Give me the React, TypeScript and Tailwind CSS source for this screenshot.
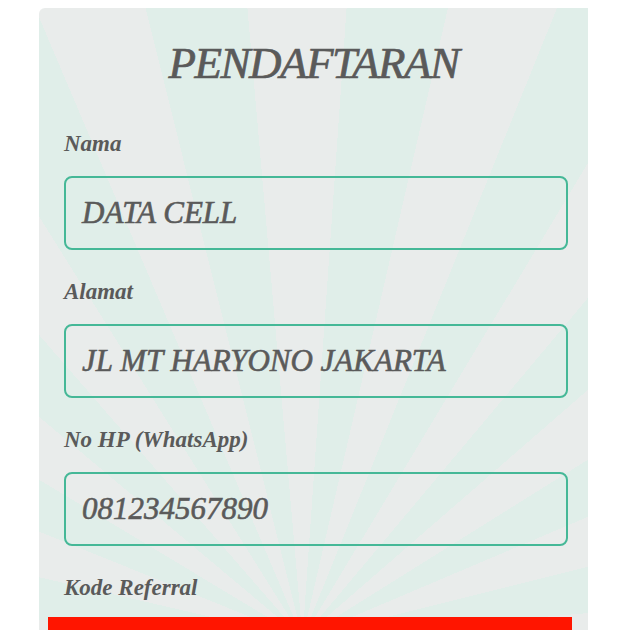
const fields = [
  { label: 'Nama', value: 'DATA CELL' },
  { label: 'Alamat', value: 'JL MT HARYONO JAKARTA' },
  { label: 'No HP (WhatsApp)', value: '081234567890' },
];

export default function App() {
  return (
    <div className="h-[630px] overflow-hidden bg-white font-['Liberation_Serif',serif] italic text-[#5a5a5a]">
      <div className="ml-[39px] mt-[8px] h-[700px] w-[549px] rounded-tl-[6px] bg-[#e9eceb] bg-[repeating-conic-gradient(from_4deg_at_48%_90%,#e0eee9_0deg_9deg,#e9eceb_9deg_18deg)] pt-[30px]">
        <h1 className="text-center text-[45px] leading-[50px] tracking-[-1.5px] [-webkit-text-stroke:0.7px_#5a5a5a]">
          PENDAFTARAN
        </h1>

        <div className="mt-[42px] pl-[25px] pr-[20px]">
          {fields.map((f) => (
            <div key={f.label} className="mb-[28px]">
              <label className="block text-[23px] font-bold leading-[28px]">{f.label}</label>
              <div className="mt-[18px] flex h-[74px] items-center rounded-[8px] border-2 border-[#45b897] px-[16px] text-[31px] leading-[36px] [-webkit-text-stroke:0.6px_#5a5a5a]">
                {f.value}
              </div>
            </div>
          ))}
          <label className="block text-[23px] font-bold leading-[28px]">Kode Referral</label>
        </div>

        <div className="mt-[15px] ml-[9px] mr-[16px] h-[50px] bg-[#ff1500]" />
      </div>
    </div>
  );
}
